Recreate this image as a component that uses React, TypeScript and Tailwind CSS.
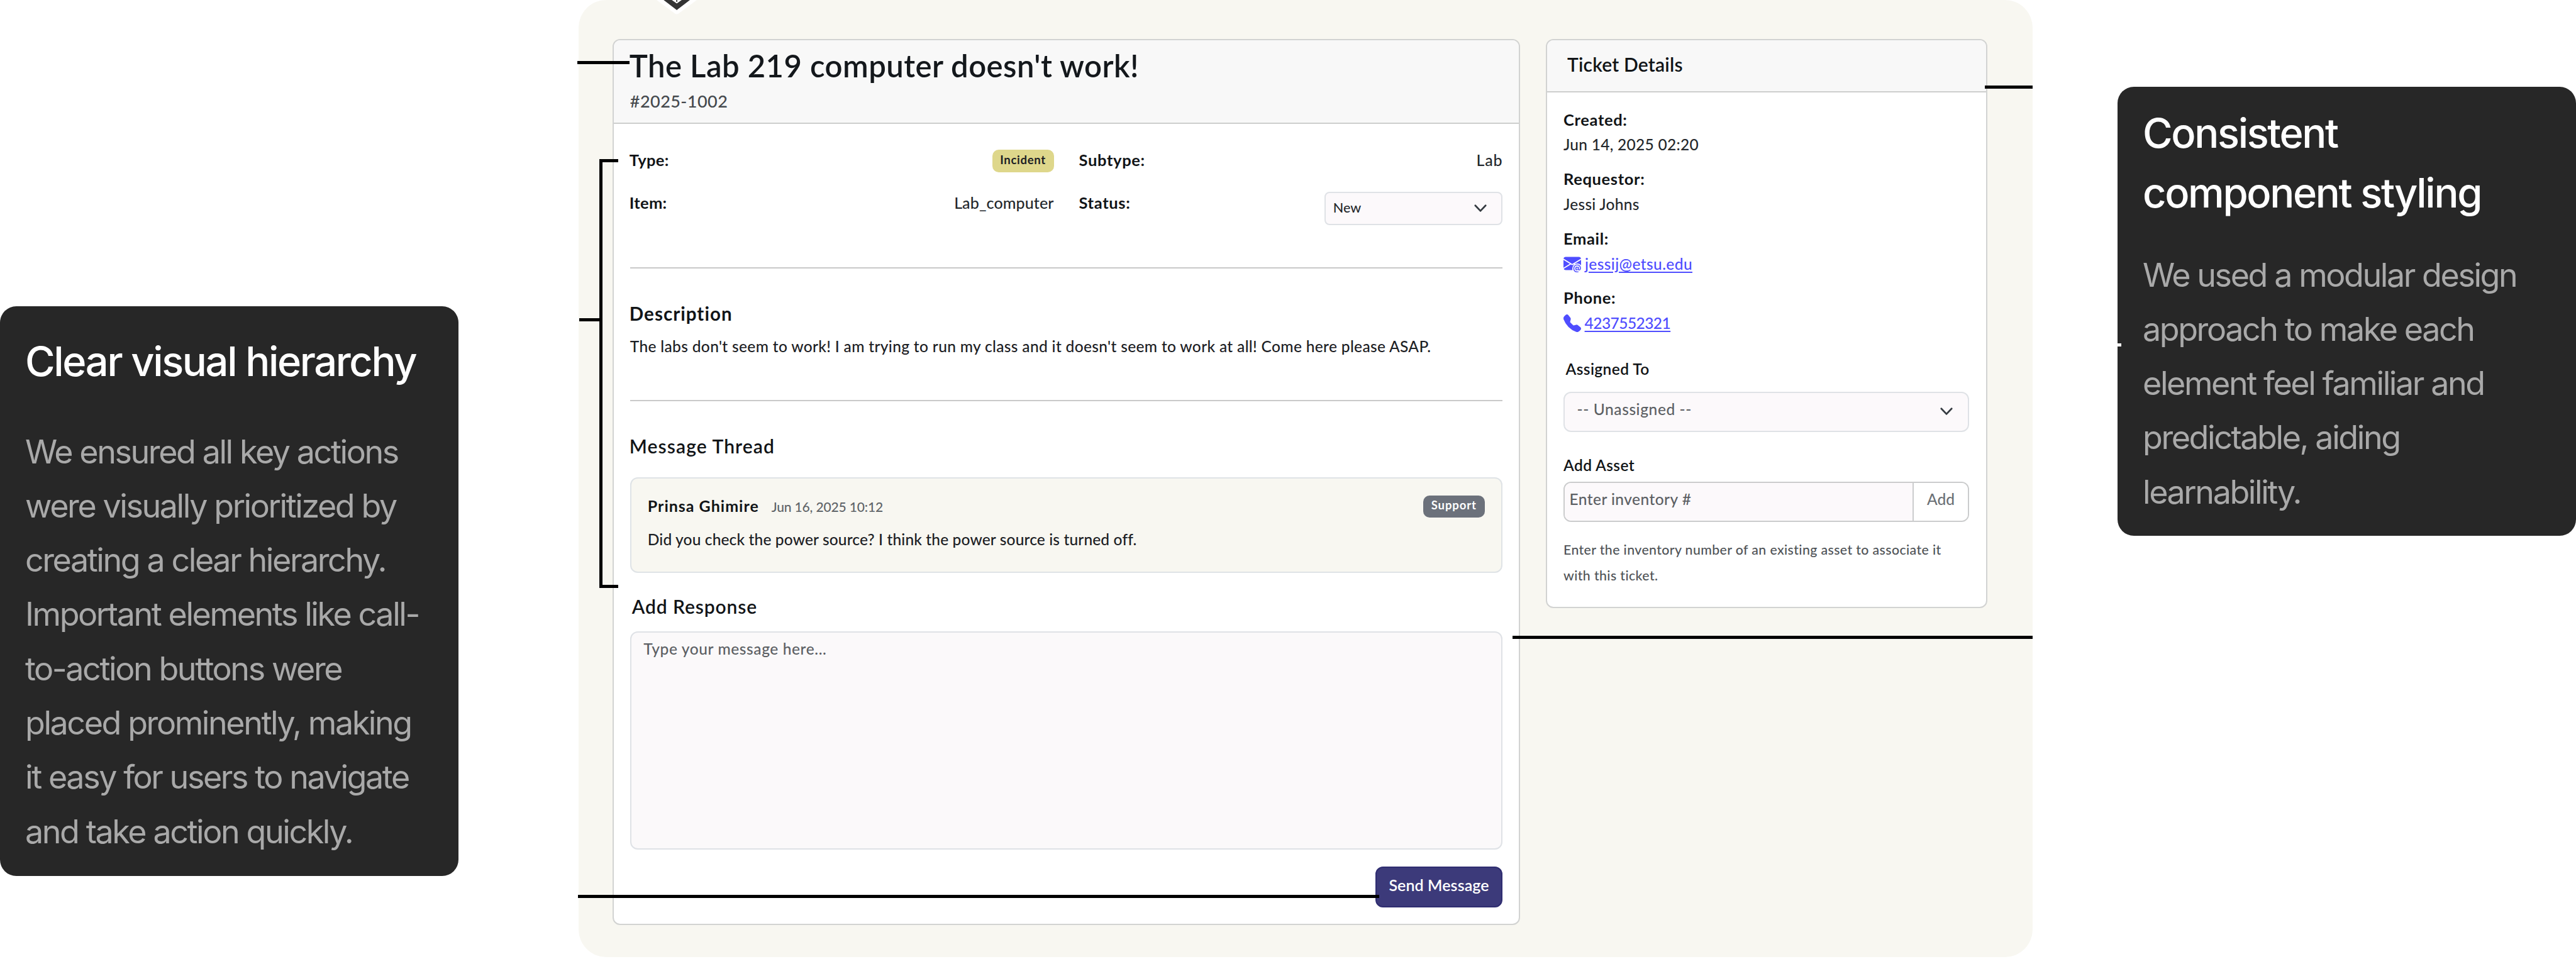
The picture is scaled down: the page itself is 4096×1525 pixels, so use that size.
import type { ReactNode } from "react";
import { BsEnvelopeAtFill, BsTelephoneFill } from "react-icons/bs";

function Chevron() {
  return (
    <svg width="20" height="13" viewBox="0 0 20 13" fill="none" className="shrink-0">
      <path d="M1.8 1.8 L10 10.4 L18.2 1.8" stroke="#343a40" strokeWidth="2.7" strokeLinecap="round" strokeLinejoin="round" />
    </svg>
  );
}

function LogoTip() {
  return (
    <svg className="absolute left-[120px] top-0" width="72" height="26" viewBox="0 0 72 26">
      <path d="M4 0 L33 21.4 Q36 23.4 39 21.4 L68 0 Z" fill="#ffffff" />
      <path d="M15.2 0 L36.1 15.9 L57 0 Z" fill="#333333" />
      <path d="M28.2 0 L36.1 5.4 L44 0 Z" fill="#ffffff" />
      <path d="M36.1 0 V3" stroke="#333333" strokeWidth="1.7" />
    </svg>
  );
}

function NoteCard({ className, title, lines }: { className: string; title: string[]; lines: string[] }) {
  return (
    <section
      className={
        "flex shrink-0 flex-col rounded-[26px] bg-[#272727] pl-[40px] font-['Inter',sans-serif] whitespace-nowrap " +
        className
      }
    >
      <h2 className="text-[65px] leading-[94.2px] font-medium tracking-[-2.35px] text-white">
        {title.map((t) => (
          <span key={t} className="block">
            {t}
          </span>
        ))}
      </h2>
      <p className="text-[52px] leading-[86.3px] tracking-[-2.42px] text-[#a9a9a9]">
        {lines.map((l) => (
          <span key={l} className="block">
            {l}
          </span>
        ))}
      </p>
    </section>
  );
}

function Detail({ label, children }: { label: string; children: ReactNode }) {
  return (
    <div className="mb-[13.2px] leading-[40.7px]">
      <div className="text-[25.5px] font-bold tracking-[0.65px] text-[#111417]">{label}</div>
      <div className="flex h-[40.7px] text-[24.5px] tracking-[0.28px] text-[#24282c]">{children}</div>
    </div>
  );
}

function TicketCard() {
  return (
    <article className="h-[1408.4px] w-[1443.5px] shrink-0 overflow-hidden rounded-[12px] border-2 border-[#d2d3d2] bg-white">
      <header className="h-[133px] border-b-2 border-[#cdcecd] bg-[#f8f8f8] pt-[11.5px] pl-[25px]">
        <h1 className="text-[49px] leading-[56px] font-semibold tracking-[0.46px] text-[#14181c]">
          The Lab 219 computer doesn't work!
        </h1>
        <div className="mt-[11.5px] pl-px text-[27px] leading-[36px] tracking-[0.45px] text-[#45494d]">#2025-1002</div>
      </header>

      <div className="px-[26px] pt-[39px]">
        <div className="grid grid-cols-2 gap-x-[40px] gap-y-[31.6px] text-[25px] leading-[36px] text-[#24282c]">
          <div className="flex h-[36px] items-start justify-between">
            <b className="-ml-px text-[25.5px] tracking-[0.3px] text-[#111417]">Type:</b>
            <span className="mt-[2px] flex h-[35.4px] w-[98px] items-center justify-center rounded-[10px] bg-[#ded78b] pb-[5px] text-[18.5px] font-bold tracking-[0.7px] text-[#1c2024]">
              Incident
            </span>
          </div>
          <div className="flex h-[36px] items-start justify-between">
            <b className="text-[25.5px] tracking-[0.65px] text-[#111417]">Subtype:</b>
            <span className="tracking-[0.8px]">Lab</span>
          </div>
          <div className="flex h-[55px] items-start justify-between">
            <b className="-ml-px text-[25.5px] tracking-[0.3px] text-[#111417]">Item:</b>
            <span className="tracking-[0.12px]">Lab_computer</span>
          </div>
          <div className="flex h-[55px] items-start justify-between">
            <b className="text-[25.5px] tracking-[0.65px] text-[#111417]">Status:</b>
            <div className="mt-[1.4px] flex h-[52.6px] w-[283.5px] items-center justify-between rounded-[8px] border-2 border-[#dfe2e6] bg-[#fcf9fb] pr-[23px] pl-[12px]">
              <span className="pb-[4px] text-[21.5px] text-[#24282c]">New</span>
              <Chevron />
            </div>
          </div>
        </div>

        <hr className="mt-[66.3px] h-[2px] border-0 bg-[#c9c9c9]" />

        <h2 className="-ml-px mt-[52px] text-[29.5px] leading-[40px] font-bold tracking-[1.05px] text-[#111417]">
          Description
        </h2>
        <p className="mt-[14px] text-[24.5px] leading-[36px] tracking-[0.34px] whitespace-nowrap text-[#1c2024]">
          The labs don't seem to work! I am trying to run my class and it doesn't seem to work at all! Come here please
          ASAP.
        </p>

        <hr className="mt-[67px] h-[2px] border-0 bg-[#c9c9c9]" />

        <h2 className="-ml-px mt-[51px] text-[30px] leading-[40px] font-semibold tracking-[1.1px] text-[#111417]">
          Message Thread
        </h2>

        <div className="mt-[30px] h-[152px] rounded-[12px] border-2 border-[#dfe3e6] bg-[#f8f7f1] pt-[24.5px] pr-[26.5px] pl-[26px] leading-[36px]">
          <div className="flex h-[36px] items-start justify-between">
            <div className="flex items-baseline gap-[20px]">
              <b className="text-[25px] tracking-[1px] text-[#111417]">Prinsa Ghimire</b>
              <span className="text-[21px] tracking-[-0.15px] text-[#5f6468]">Jun 16, 2025 10:12</span>
            </div>
            <span className="mt-[2px] flex h-[35.5px] w-[98px] items-center justify-center rounded-[10px] bg-[#6c717b] pb-[5px] text-[18.5px] font-bold tracking-[0.9px] text-white">
              Support
            </span>
          </div>
          <p className="mt-[18.8px] text-[24.5px] tracking-[0.14px] text-[#1c2024]">
            Did you check the power source? I think the power source is turned off.
          </p>
        </div>

        <h2 className="mt-[32.6px] pl-[3px] text-[30px] leading-[40px] font-semibold tracking-[0.9px] text-[#111417]">
          Add Response
        </h2>
        <div className="mt-[20px] h-[347.5px] rounded-[12px] border-2 border-[#dfe2e6] bg-[#fbf9fa] pt-[8.3px] pl-[19.5px] text-[24.5px] leading-[36px] tracking-[0.6px] text-[#5c6064]">
          Type your message here...
        </div>

        <div className="mt-[27px] flex justify-end">
          <button className="flex h-[64.5px] w-[202.5px] items-center justify-center rounded-[12px] border-2 border-[#2e2c70] bg-[#3c3a7a] pb-[7.6px] text-[25px] leading-[36px] font-semibold tracking-[0.1px] text-white">
            Send Message
          </button>
        </div>
      </div>
    </article>
  );
}

function DetailsCard() {
  return (
    <aside className="h-[904.4px] w-[701.6px] shrink-0 overflow-hidden rounded-[12px] border-2 border-[#d2d3d2] bg-white">
      <header className="h-[83px] border-b-2 border-[#cdcecd] bg-[#f8f8f8] pt-[17.4px] pl-[32px]">
        <h2 className="text-[30px] leading-[40px] font-semibold tracking-[0.2px] text-[#111417]">Ticket Details</h2>
      </header>
      <div className="px-[26px] pt-[22.4px]">
        <Detail label="Created:">Jun 14, 2025 02:20</Detail>
        <Detail label="Requestor:">Jessi Johns</Detail>
        <Detail label="Email:">
          <BsEnvelopeAtFill className="mt-[5.5px] mr-[6px] size-[28px] shrink-0 text-[#4f4dff]" />
          <a className="tracking-[0.4px] text-[#4f4dff] underline decoration-2 underline-offset-[3px]">
            jessij@etsu.edu
          </a>
        </Detail>
        <Detail label="Phone:">
          <BsTelephoneFill className="mt-[5.5px] mr-[5.6px] size-[28px] shrink-0 text-[#4f4dff]" />
          <a className="tracking-[-0.55px] text-[#4f4dff] underline decoration-2 underline-offset-[3px]">4237552321</a>
        </Detail>

        <h3 className="mt-[34.3px] pl-[3.5px] text-[24.5px] leading-[36px] font-semibold tracking-[0.4px] text-[#111417]">
          Assigned To
        </h3>
        <div className="mt-[17.5px] flex h-[64.5px] w-[645px] items-center justify-between rounded-[12px] border-2 border-[#dfe2e6] bg-[#fcf9fb] pr-[24px] pl-[19.5px]">
          <span className="pb-[8px] text-[24.5px] leading-[36px] tracking-[0.6px] text-[#5c6064]">
            -- Unassigned --
          </span>
          <Chevron />
        </div>

        <h3 className="mt-[35px] text-[24.5px] leading-[36px] font-semibold tracking-[0.4px] text-[#111417]">
          Add Asset
        </h3>
        <div className="mt-[7.9px] flex h-[64.2px] w-[645px] overflow-hidden rounded-[12px] border-2 border-[#cbcccd] text-[24.5px] leading-[36px] text-[#5c6064]">
          <div className="flex flex-1 items-center bg-[#fcf9fb] pb-[8px] pl-[7.5px] tracking-[0.45px]">
            Enter inventory #
          </div>
          <div className="flex w-[88px] items-center justify-center border-l-2 border-[#cbcccd] bg-white pb-[8px] text-[#6b7075]">
            Add
          </div>
        </div>

        <p className="mt-[24.2px] text-[21.3px] leading-[40.5px] tracking-[0.39px] whitespace-nowrap text-[#4f5357]">
          Enter the inventory number of an existing asset to associate it
          <br />
          with this ticket.
        </p>
      </div>
    </aside>
  );
}

/* Callout lines that link the screen to the notes on either side. */
function Connectors() {
  return (
    <div className="pointer-events-none">
      <i className="absolute top-[97px] left-[-2px] h-[5px] w-[83px] bg-black" />
      <i className="absolute top-[253px] left-[33.5px] h-[682px] w-[30px] border-y-[5px] border-l-[5px] border-black" />
      <i className="absolute top-[506px] left-[1px] h-[5px] w-[33px] bg-black" />
      <i className="absolute top-[1423px] left-[-1px] h-[5px] w-[1274px] bg-black" />
      <i className="absolute top-[136px] right-0 h-[5px] w-[76px] bg-black" />
      <i className="absolute top-[1011px] right-0 h-[5px] w-[827px] bg-black" />
    </div>
  );
}

export default function App() {
  return (
    <main className="flex h-[1525px] w-[4096px] items-start overflow-hidden bg-white font-['Lato',sans-serif] font-medium">
      <NoteCard
        className="mt-[487px] h-[905.5px] w-[728.5px] gap-[53.3px] pt-[41px] font-normal"
        title={["Clear visual hierarchy"]}
        lines={[
          "We ensured all key actions",
          "were visually prioritized by",
          "creating a clear hierarchy.",
          "Important elements like call-",
          "to-action buttons were",
          "placed prominently, making",
          "it easy for users to navigate",
          "and take action quickly.",
        ]}
      />

      <div className="relative ml-[191px] flex h-[1521.7px] w-[2312.5px] shrink-0 items-start gap-[40.7px] rounded-[44px] bg-[#f8f7f1] pt-[62.3px] pl-[54.3px]">
        <LogoTip />
        <TicketCard />
        <DetailsCard />
        <Connectors />
      </div>

      <div className="relative ml-[135px] shrink-0">
        <NoteCard
          className="mt-[138.4px] h-[713.4px] w-[729px] gap-[40.8px] pt-[27px] font-normal"
          title={["Consistent", "component styling"]}
          lines={[
            "We used a modular design",
            "approach to make each",
            "element feel familiar and",
            "predictable, aiding",
            "learnability.",
          ]}
        />
        <i className="absolute top-[546px] left-0 h-[5px] w-[6px] bg-white" />
      </div>
    </main>
  );
}
